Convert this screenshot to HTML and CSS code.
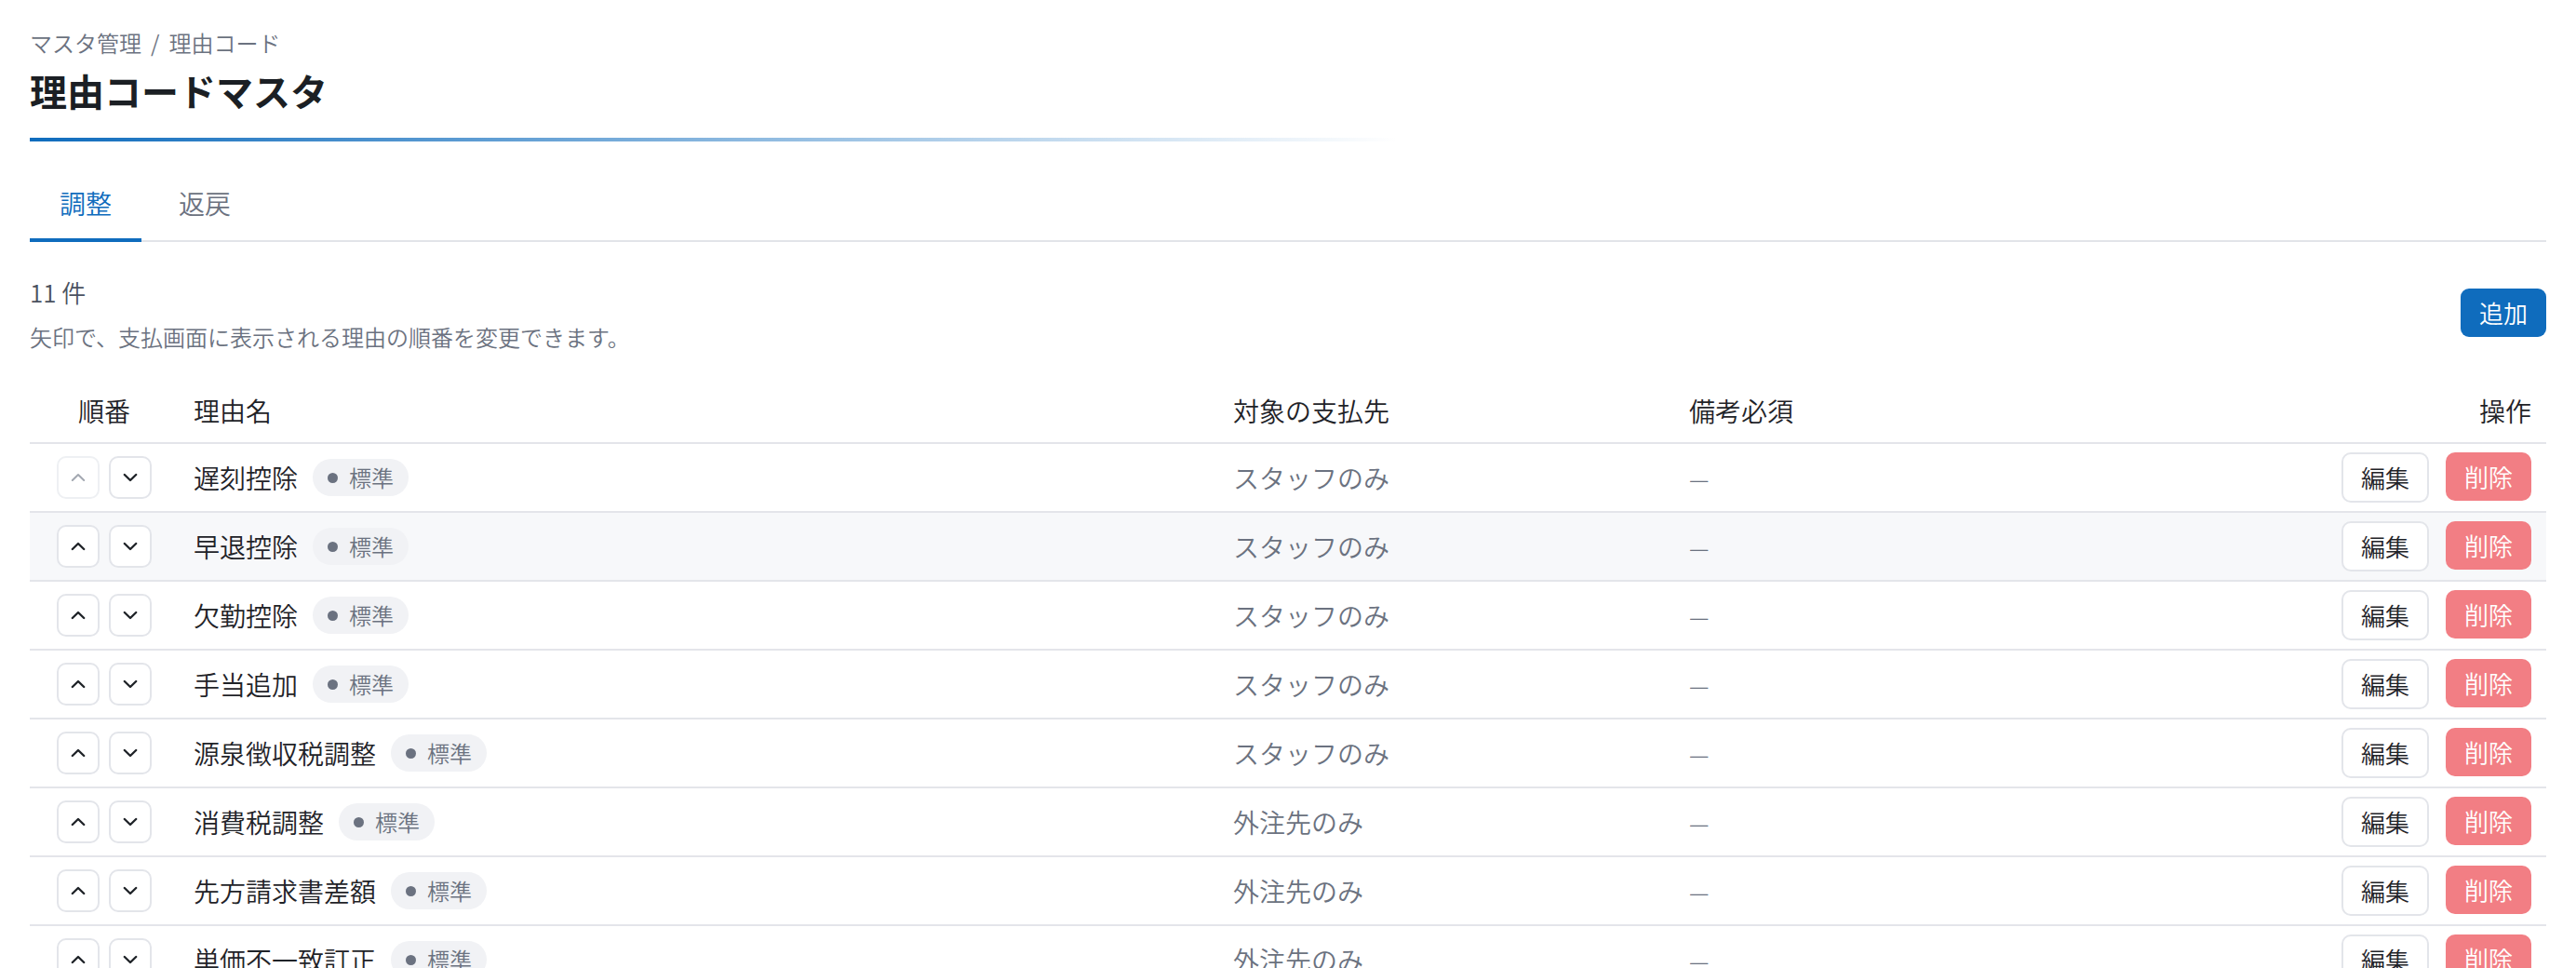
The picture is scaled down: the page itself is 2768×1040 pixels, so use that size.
FILE: index.html
```html
<!DOCTYPE html>
<html lang="ja">
<head>
<meta charset="utf-8">
<title>理由コードマスタ</title>
<link rel="stylesheet" href="styles.css">
</head>
<body>
<div class="page">
  <nav class="breadcrumb"><span>マスタ管理</span><span class="sep">/</span><span>理由コード</span></nav>
  <h1 class="title">理由コードマスタ</h1>
  <div class="title-rule"></div>

  <div class="tabs">
    <button class="tab active">調整</button>
    <button class="tab">返戻</button>
  </div>

  <div class="toolbar">
    <div class="summary">
      <div class="count">11 件</div>
      <p class="hint">矢印で、支払画面に表示される理由の順番を変更できます。</p>
    </div>
    <button class="btn btn-primary">追加</button>
  </div>

  <table class="grid">
    <colgroup>
      <col class="c-order"><col class="c-name"><col class="c-target"><col class="c-note"><col class="c-actions">
    </colgroup>
    <thead>
      <tr><th class="center">順番</th><th>理由名</th><th>対象の支払先</th><th>備考必須</th><th class="right">操作</th></tr>
    </thead>
    <tbody>
      <tr>
        <td><div class="order"><button class="arrow" disabled><svg viewBox="0 0 16 10" width="16" height="10"><path d="M1.8 8 L8 2 L14.2 8"/></svg></button><button class="arrow"><svg viewBox="0 0 16 10" width="16" height="10"><path d="M1.8 2 L8 8 L14.2 2"/></svg></button></div></td>
        <td><div class="name">遅刻控除<span class="badge">標準</span></div></td>
        <td class="muted">スタッフのみ</td>
        <td class="muted"><span class="dash">—</span></td>
        <td><div class="actions"><button class="btn btn-edit">編集</button><button class="btn btn-delete">削除</button></div></td>
      </tr>
      <tr class="is-hover">
        <td><div class="order"><button class="arrow"><svg viewBox="0 0 16 10" width="16" height="10"><path d="M1.8 8 L8 2 L14.2 8"/></svg></button><button class="arrow"><svg viewBox="0 0 16 10" width="16" height="10"><path d="M1.8 2 L8 8 L14.2 2"/></svg></button></div></td>
        <td><div class="name">早退控除<span class="badge">標準</span></div></td>
        <td class="muted">スタッフのみ</td>
        <td class="muted"><span class="dash">—</span></td>
        <td><div class="actions"><button class="btn btn-edit">編集</button><button class="btn btn-delete">削除</button></div></td>
      </tr>
      <tr>
        <td><div class="order"><button class="arrow"><svg viewBox="0 0 16 10" width="16" height="10"><path d="M1.8 8 L8 2 L14.2 8"/></svg></button><button class="arrow"><svg viewBox="0 0 16 10" width="16" height="10"><path d="M1.8 2 L8 8 L14.2 2"/></svg></button></div></td>
        <td><div class="name">欠勤控除<span class="badge">標準</span></div></td>
        <td class="muted">スタッフのみ</td>
        <td class="muted"><span class="dash">—</span></td>
        <td><div class="actions"><button class="btn btn-edit">編集</button><button class="btn btn-delete">削除</button></div></td>
      </tr>
      <tr>
        <td><div class="order"><button class="arrow"><svg viewBox="0 0 16 10" width="16" height="10"><path d="M1.8 8 L8 2 L14.2 8"/></svg></button><button class="arrow"><svg viewBox="0 0 16 10" width="16" height="10"><path d="M1.8 2 L8 8 L14.2 2"/></svg></button></div></td>
        <td><div class="name">手当追加<span class="badge">標準</span></div></td>
        <td class="muted">スタッフのみ</td>
        <td class="muted"><span class="dash">—</span></td>
        <td><div class="actions"><button class="btn btn-edit">編集</button><button class="btn btn-delete">削除</button></div></td>
      </tr>
      <tr>
        <td><div class="order"><button class="arrow"><svg viewBox="0 0 16 10" width="16" height="10"><path d="M1.8 8 L8 2 L14.2 8"/></svg></button><button class="arrow"><svg viewBox="0 0 16 10" width="16" height="10"><path d="M1.8 2 L8 8 L14.2 2"/></svg></button></div></td>
        <td><div class="name">源泉徴収税調整<span class="badge">標準</span></div></td>
        <td class="muted">スタッフのみ</td>
        <td class="muted"><span class="dash">—</span></td>
        <td><div class="actions"><button class="btn btn-edit">編集</button><button class="btn btn-delete">削除</button></div></td>
      </tr>
      <tr>
        <td><div class="order"><button class="arrow"><svg viewBox="0 0 16 10" width="16" height="10"><path d="M1.8 8 L8 2 L14.2 8"/></svg></button><button class="arrow"><svg viewBox="0 0 16 10" width="16" height="10"><path d="M1.8 2 L8 8 L14.2 2"/></svg></button></div></td>
        <td><div class="name">消費税調整<span class="badge">標準</span></div></td>
        <td class="muted">外注先のみ</td>
        <td class="muted"><span class="dash">—</span></td>
        <td><div class="actions"><button class="btn btn-edit">編集</button><button class="btn btn-delete">削除</button></div></td>
      </tr>
      <tr>
        <td><div class="order"><button class="arrow"><svg viewBox="0 0 16 10" width="16" height="10"><path d="M1.8 8 L8 2 L14.2 8"/></svg></button><button class="arrow"><svg viewBox="0 0 16 10" width="16" height="10"><path d="M1.8 2 L8 8 L14.2 2"/></svg></button></div></td>
        <td><div class="name">先方請求書差額<span class="badge">標準</span></div></td>
        <td class="muted">外注先のみ</td>
        <td class="muted"><span class="dash">—</span></td>
        <td><div class="actions"><button class="btn btn-edit">編集</button><button class="btn btn-delete">削除</button></div></td>
      </tr>
      <tr>
        <td><div class="order"><button class="arrow"><svg viewBox="0 0 16 10" width="16" height="10"><path d="M1.8 8 L8 2 L14.2 8"/></svg></button><button class="arrow"><svg viewBox="0 0 16 10" width="16" height="10"><path d="M1.8 2 L8 8 L14.2 2"/></svg></button></div></td>
        <td><div class="name">単価不一致訂正<span class="badge">標準</span></div></td>
        <td class="muted">外注先のみ</td>
        <td class="muted"><span class="dash">—</span></td>
        <td><div class="actions"><button class="btn btn-edit">編集</button><button class="btn btn-delete">削除</button></div></td>
      </tr>
      <tr>
        <td><div class="order"><button class="arrow"><svg viewBox="0 0 16 10" width="16" height="10"><path d="M1.8 8 L8 2 L14.2 8"/></svg></button><button class="arrow"><svg viewBox="0 0 16 10" width="16" height="10"><path d="M1.8 2 L8 8 L14.2 2"/></svg></button></div></td>
        <td><div class="name">立替金精算</div></td>
        <td class="muted">スタッフのみ</td>
        <td class="muted"><span class="dash">—</span></td>
        <td><div class="actions"><button class="btn btn-edit">編集</button><button class="btn btn-delete">削除</button></div></td>
      </tr>
      <tr>
        <td><div class="order"><button class="arrow"><svg viewBox="0 0 16 10" width="16" height="10"><path d="M1.8 8 L8 2 L14.2 8"/></svg></button><button class="arrow"><svg viewBox="0 0 16 10" width="16" height="10"><path d="M1.8 2 L8 8 L14.2 2"/></svg></button></div></td>
        <td><div class="name">前払金相殺</div></td>
        <td class="muted">スタッフのみ</td>
        <td class="muted"><span class="dash">—</span></td>
        <td><div class="actions"><button class="btn btn-edit">編集</button><button class="btn btn-delete">削除</button></div></td>
      </tr>
      <tr>
        <td><div class="order"><button class="arrow"><svg viewBox="0 0 16 10" width="16" height="10"><path d="M1.8 8 L8 2 L14.2 8"/></svg></button><button class="arrow" disabled><svg viewBox="0 0 16 10" width="16" height="10"><path d="M1.8 2 L8 8 L14.2 2"/></svg></button></div></td>
        <td><div class="name">その他調整</div></td>
        <td class="muted">外注先のみ</td>
        <td class="muted"><span class="dash">—</span></td>
        <td><div class="actions"><button class="btn btn-edit">編集</button><button class="btn btn-delete">削除</button></div></td>
      </tr>
    </tbody>
  </table>
</div>
</body>
</html>
```
FILE: styles.css
```css
* { box-sizing: border-box; }

body {
  margin: 0;
  background: #ffffff;
  color: #1f2328;
  font-family: "Noto Sans CJK JP", "Noto Sans", sans-serif;
  font-weight: 350;
}

.page {
  padding: 28px 32px 0;
}

.breadcrumb {
  display: flex;
  font-size: 24px;
  line-height: 36px;
  color: #6b7280;
}

.breadcrumb .sep {
  margin: 0 10px;
}

.title {
  margin: 7px 0 0;
  font-size: 40px;
  line-height: 52px;
  font-weight: 700;
  color: #1b1f24;
}

.title-rule {
  margin-top: 25px;
  width: 1470px;
  height: 4px;
  background: linear-gradient(90deg, #0f6cbd 0%, rgba(15, 108, 189, 0) 100%);
}

.tabs {
  display: flex;
  gap: 8px;
  margin-top: 28px;
  border-bottom: 2px solid #e2e4e9;
}

.tab {
  appearance: none;
  background: none;
  border: 0;
  border-bottom: 4px solid transparent;
  margin-bottom: -2px;
  padding: 18px 32px;
  font-family: inherit;
  font-weight: inherit;
  font-size: 28px;
  line-height: 40px;
  color: #6b7280;
  cursor: pointer;
}

.tab.active {
  color: #0f6cbd;
  border-bottom-color: #0f6cbd;
}

.toolbar {
  display: flex;
  justify-content: space-between;
  align-items: flex-start;
  margin-top: 36px;
}

.count {
  font-size: 26px;
  line-height: 36px;
  color: #4b5260;
}

.hint {
  margin: 12px 0 0;
  font-size: 24px;
  line-height: 36px;
  color: #6b7280;
}

.btn {
  appearance: none;
  font-family: inherit;
  font-weight: inherit;
  font-size: 26px;
  line-height: 1;
  cursor: pointer;
  display: inline-flex;
  align-items: center;
  justify-content: center;
}

.btn-primary {
  margin-top: 14px;
  height: 52px;
  padding: 0 20px;
  border: 0;
  border-radius: 9px;
  background: #0f6cbd;
  color: #ffffff;
}

.grid {
  width: 100%;
  margin-top: 27px;
  border-collapse: separate;
  border-spacing: 0;
  table-layout: fixed;
}

.c-order { width: 160px; }
.c-name { width: 1117px; }
.c-target { width: 490px; }
.c-note { width: 490px; }

.grid th {
  padding: 14px 16px;
  font-size: 28px;
  line-height: 40px;
  font-weight: inherit;
  text-align: left;
  color: #1f2328;
  border-bottom: 2px solid #e4e5ea;
}

.grid th.center { text-align: center; }
.grid th.right { text-align: right; }

.grid td {
  padding: 9px 16px;
  font-size: 28px;
  line-height: 40px;
  vertical-align: middle;
  border-bottom: 2px solid #e4e5ea;
  color: #1f2328;
}

.grid tr.is-hover td {
  background: #f7f8fa;
}

.grid td.muted {
  color: #6b7280;
}

.dash {
  font-size: 24px;
}

.order {
  display: flex;
  justify-content: center;
  gap: 10px;
}

.arrow {
  width: 46px;
  height: 46px;
  padding: 0;
  display: grid;
  place-items: center;
  border: 2px solid #e3e5ea;
  border-radius: 10px;
  background: #ffffff;
  color: #1f2328;
  cursor: pointer;
}

.arrow svg {
  display: block;
  fill: none;
  stroke: currentColor;
  stroke-width: 2.4;
  stroke-linecap: round;
  stroke-linejoin: round;
}

.arrow:disabled {
  border-color: #eef0f3;
  color: #a3a8b1;
  cursor: default;
}

.arrow:disabled svg {
  stroke-width: 2;
}

.name {
  display: flex;
  align-items: center;
  gap: 16px;
}

.badge {
  display: inline-flex;
  align-items: center;
  gap: 12px;
  height: 40px;
  padding: 0 16px;
  border-radius: 20px;
  background: #f1f2f5;
  color: #6b7280;
  font-size: 24px;
  line-height: 1;
}

.badge::before {
  content: "";
  width: 11px;
  height: 11px;
  border-radius: 50%;
  background: #6b7280;
}

.actions {
  display: flex;
  justify-content: flex-end;
  gap: 18px;
}

.btn-edit {
  height: 54px;
  padding: 0 19px;
  border: 2px solid #e3e5ea;
  border-radius: 10px;
  background: #ffffff;
  color: #1f2328;
}

.btn-delete {
  height: 52px;
  padding: 0 20px;
  border: 0;
  border-radius: 10px;
  background: #f27e84;
  color: #ffffff;
}
```
